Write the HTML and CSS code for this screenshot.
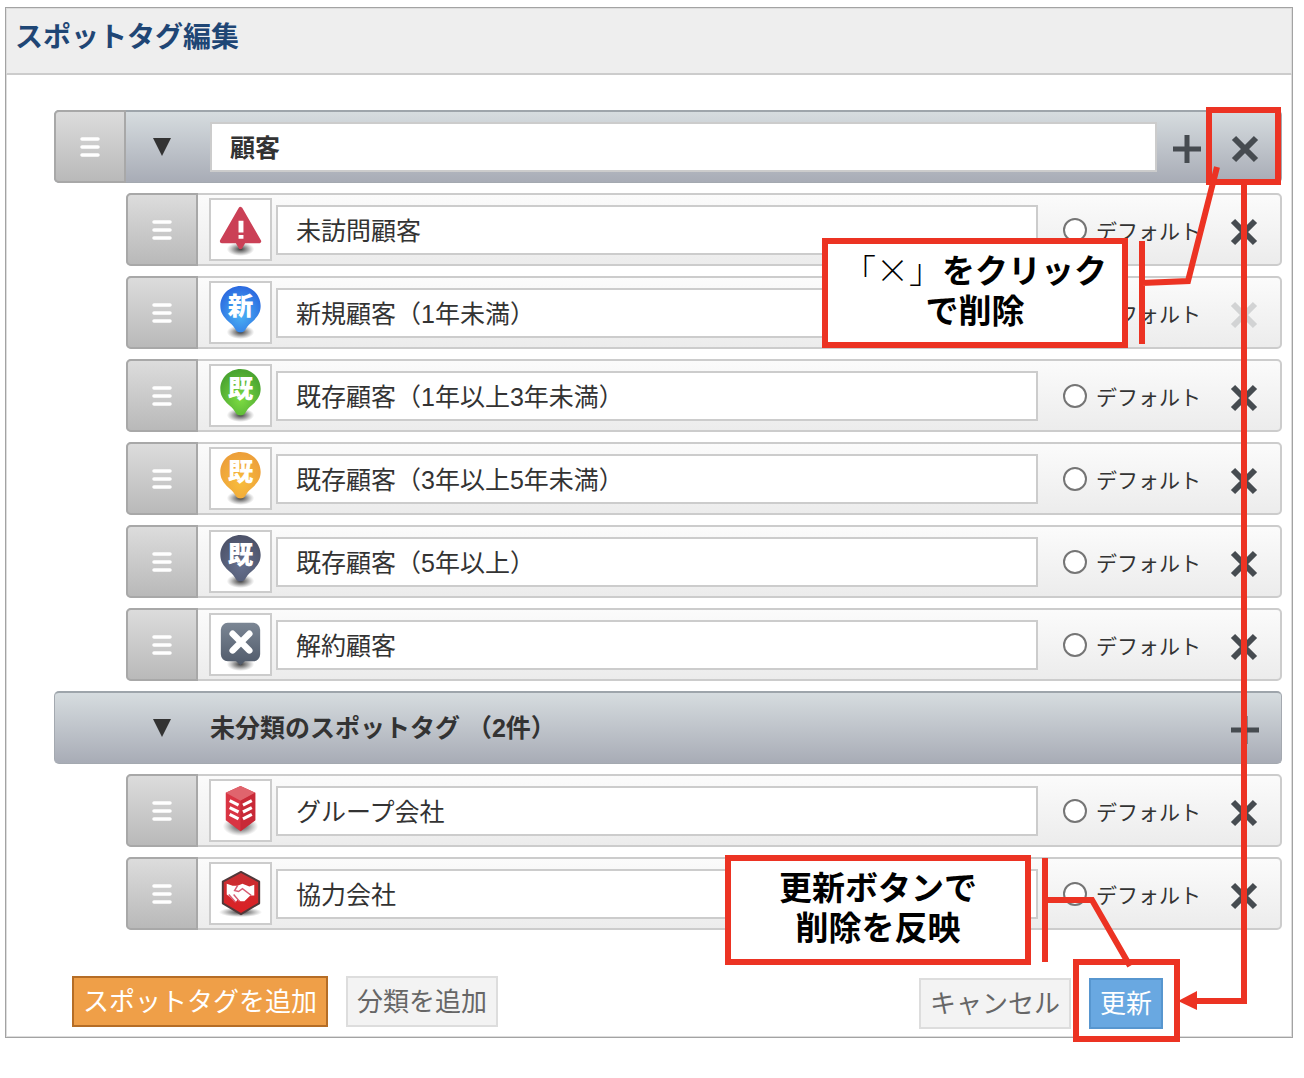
FILE: index.html
```html
<!DOCTYPE html>
<html lang="ja">
<head>
<meta charset="utf-8">
<title>スポットタグ編集</title>
<link rel="stylesheet" href="styles.css">
</head>
<body>
<svg class="defs" width="0" height="0" aria-hidden="true">
  <defs>
    <radialGradient id="shade"><stop offset="0" stop-color="#222" stop-opacity=".9"/><stop offset=".5" stop-color="#444" stop-opacity=".5"/><stop offset="1" stop-color="#666" stop-opacity="0"/></radialGradient>
    <radialGradient id="blue" cx=".5" cy=".62" r=".6"><stop offset="0" stop-color="#4bb4f5"/><stop offset="1" stop-color="#2c6be0"/></radialGradient>
    <radialGradient id="green" cx=".5" cy=".65" r=".6"><stop offset="0" stop-color="#7ddc42"/><stop offset="1" stop-color="#4ba531"/></radialGradient>
    <radialGradient id="orange" cx=".5" cy=".65" r=".6"><stop offset="0" stop-color="#f8bd3c"/><stop offset="1" stop-color="#eda03a"/></radialGradient>
    <radialGradient id="slate" cx=".5" cy=".65" r=".6"><stop offset="0" stop-color="#65708f"/><stop offset="1" stop-color="#4e546b"/></radialGradient>
    <linearGradient id="steel" x2="0" y2="1"><stop offset="0" stop-color="#7b8694"/><stop offset="1" stop-color="#505a6a"/></linearGradient>
    <linearGradient id="ruby" x2="0" y2="1"><stop offset="0" stop-color="#c72f33"/><stop offset="1" stop-color="#dc2024"/></linearGradient>
    <symbol id="pin" viewBox="0 0 60 60"><ellipse cx="30" cy="50" rx="14" ry="7" fill="url(#shade)"/><path d="M30 3C18.500 3 9.500 12 9.500 23.500c0 6 2.500 10 6.500 14 4 3.500 7 6 8.500 9 1.500 5 9.500 5 11 0 1.500-3 4.500-5.500 8.500-9 4-4 6.500-8 6.500-14C50.500 12 41.500 3 30 3z"/></symbol>
    <symbol id="cross" viewBox="0 0 28 28"><path d="M3 3 25 25M25 3 3 25" stroke="currentColor" stroke-width="6"/></symbol>
    <symbol id="plus" viewBox="0 0 28 28"><path d="M14 0V28M0 14H28" stroke="currentColor" stroke-width="5"/></symbol>
    <symbol id="grip" viewBox="0 0 20 20"><path d="M2 2H18M2 10H18M2 18H18" stroke="#fff" stroke-width="3.500" stroke-linecap="round"/></symbol>
  </defs>
</svg>
<div class="stage">
<main class="panel">
  <header class="panel-header"><h1>スポットタグ編集</h1></header>
  <form class="editor">
    <div class="group">
      <button type="button" class="handle" aria-label="並べ替え"><svg><use href="#grip"/></svg></button>
      <button type="button" class="toggle" aria-label="開閉"><span class="caret"></span></button>
      <input class="field group-name" type="text" aria-label="分類名" value="顧客">
      <button type="button" class="add" aria-label="追加"><svg><use href="#plus"/></svg></button>
      <button type="button" class="remove" aria-label="削除"><svg><use href="#cross"/></svg></button>
    </div>

    <div class="tag">
      <button type="button" class="handle" aria-label="並べ替え"><svg><use href="#grip"/></svg></button>
      <button type="button" class="icon" aria-label="アイコン"><svg viewBox="0 0 60 60"><ellipse cx="30" cy="50" rx="14" ry="7" fill="url(#shade)"/><path d="M30 9 49 42H33.500L30 48 26.500 42H11z" fill="#cb4056" stroke="#cb4056" stroke-width="4" stroke-linejoin="round"/><path d="M28 21h5v12h-5zM28 35.500h5v4h-5z" fill="#fff"/></svg></button>
      <input class="field" type="text" aria-label="タグ名" value="未訪問顧客">
      <label class="default"><input type="radio" name="default">デフォルト</label>
      <button type="button" class="remove" aria-label="削除"><svg><use href="#cross"/></svg></button>
    </div>

    <div class="tag">
      <button type="button" class="handle" aria-label="並べ替え"><svg><use href="#grip"/></svg></button>
      <button type="button" class="icon" aria-label="アイコン"><svg viewBox="0 0 60 60"><use href="#pin" fill="url(#blue)"/><text x="30" y="33">新</text></svg></button>
      <input class="field" type="text" aria-label="タグ名" value="新規顧客（1年未満）">
      <label class="default"><input type="radio" name="default">デフォルト</label>
      <button type="button" class="remove" aria-label="削除" disabled><svg><use href="#cross"/></svg></button>
    </div>

    <div class="tag">
      <button type="button" class="handle" aria-label="並べ替え"><svg><use href="#grip"/></svg></button>
      <button type="button" class="icon" aria-label="アイコン"><svg viewBox="0 0 60 60"><use href="#pin" fill="url(#green)"/><text x="30" y="33">既</text></svg></button>
      <input class="field" type="text" aria-label="タグ名" value="既存顧客（1年以上3年未満）">
      <label class="default"><input type="radio" name="default">デフォルト</label>
      <button type="button" class="remove" aria-label="削除"><svg><use href="#cross"/></svg></button>
    </div>

    <div class="tag">
      <button type="button" class="handle" aria-label="並べ替え"><svg><use href="#grip"/></svg></button>
      <button type="button" class="icon" aria-label="アイコン"><svg viewBox="0 0 60 60"><use href="#pin" fill="url(#orange)"/><text x="30" y="33">既</text></svg></button>
      <input class="field" type="text" aria-label="タグ名" value="既存顧客（3年以上5年未満）">
      <label class="default"><input type="radio" name="default">デフォルト</label>
      <button type="button" class="remove" aria-label="削除"><svg><use href="#cross"/></svg></button>
    </div>

    <div class="tag">
      <button type="button" class="handle" aria-label="並べ替え"><svg><use href="#grip"/></svg></button>
      <button type="button" class="icon" aria-label="アイコン"><svg viewBox="0 0 60 60"><use href="#pin" fill="url(#slate)"/><text x="30" y="33">既</text></svg></button>
      <input class="field" type="text" aria-label="タグ名" value="既存顧客（5年以上）">
      <label class="default"><input type="radio" name="default">デフォルト</label>
      <button type="button" class="remove" aria-label="削除"><svg><use href="#cross"/></svg></button>
    </div>

    <div class="tag">
      <button type="button" class="handle" aria-label="並べ替え"><svg><use href="#grip"/></svg></button>
      <button type="button" class="icon" aria-label="アイコン"><svg viewBox="0 0 60 60"><ellipse cx="30" cy="50" rx="14" ry="7" fill="url(#shade)"/><path d="M17 8H43a7 7 0 0 1 7 7V40a7 7 0 0 1-7 7H34.500L30 51 25.500 47H17a7 7 0 0 1-7-7V15a7 7 0 0 1 7-7z" fill="url(#steel)"/><path d="M22 19 39 36M39 19 22 36" stroke="#fff" stroke-width="6.500" stroke-linecap="round"/></svg></button>
      <input class="field" type="text" aria-label="タグ名" value="解約顧客">
      <label class="default"><input type="radio" name="default">デフォルト</label>
      <button type="button" class="remove" aria-label="削除"><svg><use href="#cross"/></svg></button>
    </div>

    <div class="group unsorted">
      <button type="button" class="toggle" aria-label="開閉"><span class="caret"></span></button>
      <h2>未分類のスポットタグ （2件）</h2>
      <button type="button" class="remove" aria-label="追加"><svg><use href="#plus"/></svg></button>
    </div>

    <div class="tag">
      <button type="button" class="handle" aria-label="並べ替え"><svg><use href="#grip"/></svg></button>
      <button type="button" class="icon" aria-label="アイコン"><svg viewBox="0 0 60 60"><ellipse cx="30" cy="46" rx="18" ry="10" fill="url(#shade)"/><path d="M30 5 45 12V40L30 51 15 40V12z" fill="#d93443"/><path d="M30 5 45 12 30 20 15 12z" fill="#e0646d"/><path d="M30 20V51L45 40V12z" fill="#c82937"/><path d="M19 20 28 24.500M19 27 28 31.500M19 34 28 38.500M32.500 24.500 41.500 20M32.500 31.500 41.500 27M32.500 38.500 41.500 34" stroke="#fff" stroke-width="3.200"/></svg></button>
      <input class="field" type="text" aria-label="タグ名" value="グループ会社">
      <label class="default"><input type="radio" name="default">デフォルト</label>
      <button type="button" class="remove" aria-label="削除"><svg><use href="#cross"/></svg></button>
    </div>

    <div class="tag">
      <button type="button" class="handle" aria-label="並べ替え"><svg><use href="#grip"/></svg></button>
      <button type="button" class="icon" aria-label="アイコン"><svg viewBox="0 0 60 60"><ellipse cx="30" cy="49" rx="22" ry="5" fill="url(#shade)"/><path d="M30.500 8 49 18V40L30.500 51 12 40V18z" fill="url(#ruby)" stroke="#50383a" stroke-width="2" stroke-linejoin="round"/><path d="M16 20 22 22 27 22 32 20 39 23 44 21V32L40 32 34 38 30 38 27 36 25 39 20 34 16 31z" fill="#fff"/><path d="M27 22 24 27 28 28 32 25 41 32M18 31 25 39M23 31 29 38" fill="none" stroke="#d75b72" stroke-width="1.500"/></svg></button>
      <input class="field" type="text" aria-label="タグ名" value="協力会社">
      <label class="default"><input type="radio" name="default">デフォルト</label>
      <button type="button" class="remove" aria-label="削除"><svg><use href="#cross"/></svg></button>
    </div>

    <footer class="actions">
      <button type="button" class="btn btn-add">スポットタグを追加</button>
      <button type="button" class="btn">分類を追加</button>
      <div class="actions-end">
        <button type="button" class="btn">キャンセル</button>
        <button type="submit" class="btn btn-update">更新</button>
      </div>
    </footer>
  </form>
</main>

<svg class="guide" viewBox="704 0 600 1078" aria-hidden="true">
  <g fill="none" stroke="#ec3323" stroke-width="6">
    <rect x="1209" y="110" width="69" height="72"/>
    <path d="M1244 183V1001H1194"/>
    <path d="M1142 241V344M1142 283 1188 281 1217 167"/>
    <path d="M1045 858V962M1045 900H1092L1130 966"/>
    <rect x="1076" y="962" width="101" height="77"/>
  </g>
  <path d="M1178 1001 1197 991V1010z" fill="#ec3323"/>
</svg>
<p class="callout callout-delete"><span class="thin">「×」</span>をクリック<br>で削除</p>
<p class="callout callout-update">更新ボタンで<br>削除を反映</p>
</div>
</body>
</html>
```

FILE: styles.css
```css
* { box-sizing: border-box; }

body {
  margin: 0;
  background: #fff;
  color: #333;
  font-family: "Liberation Sans", "Noto Sans CJK JP", sans-serif;
  font-size: 25px;
}

button, input { font: inherit; color: inherit; margin: 0; padding: 0; }
button { background: none; border: 0; display: flex; align-items: center; justify-content: center; }
.defs { position: absolute; }

.stage { position: relative; padding: 7px 11px 40px 5px; }

.panel { border: 1px solid #a3a3a3; box-shadow: inset 0 0 0 1px #ddd; }
.panel-header {
  height: 67px;
  padding: 9px 8px;
  background: #eee;
  border: 1px solid #ddd;
  border-bottom: 2px solid #ccc;
}
h1 { margin: 0; font-size: 28px; line-height: 40px; color: #1f4675; }

.editor {
  display: flex;
  flex-direction: column;
  gap: 10px;
  padding: 35px 10px 8px 48px;
}

/* rows */
.group, .tag { display: flex; align-items: center; height: 73px; border-radius: 5px; }
.group {
  background: linear-gradient(#d6dcdf, #a8acb6);
  border: 1px solid #a4a9b0;
  border-top: 2px solid #9ea5ab;
}
.tag {
  margin-left: 72px;
  background: linear-gradient(#fbfbfb, #ececec);
  border: 2px solid #ccc;
}

.handle {
  flex: none;
  align-self: stretch;
  width: 72px;
  margin: -2px 0 -1px -1px;
  background: linear-gradient(#dcdcdc, #b9b9b9);
  border: 2px solid #a8a8a8;
  border-radius: 5px 0 0 5px;
}
.tag .handle { margin: -2px 0 -2px -2px; }
.handle svg { width: 20px; height: 20px; }

.toggle { flex: none; width: 72px; height: 60px; margin-right: 12px; }
.caret { border: 9px solid transparent; border-top: 18px solid #333; border-bottom: 0; }

.icon {
  flex: none;
  width: 63px;
  height: 63px;
  margin: 0 4px 0 11px;
  background: #fff;
  border: 2px solid #ccc;
}
.icon svg { width: 59px; height: 59px; }
.icon text {
  font: 900 26px "Noto Sans CJK JP", sans-serif;
  fill: #fff;
  text-anchor: middle;
}

.field {
  flex: 1;
  min-width: 0;
  height: 50px;
  padding: 0 18px 2px;
  background: #fff;
  border: 2px solid #ccc;
  border-radius: 0;
}
.group-name { font-weight: bold; }

.default {
  flex: none;
  display: flex;
  align-items: center;
  gap: 9px;
  width: 170px;
  padding-left: 25px;
  font-size: 21px;
  white-space: nowrap;
}
.default input {
  appearance: none;
  width: 24px;
  height: 24px;
  background: #fff;
  border: 2px solid #757575;
  border-radius: 50%;
}

.add { flex: none; width: 44px; height: 60px; margin-left: 8px; padding-top: 4px; color: #464b50; }
.remove { flex: none; width: 72px; height: 60px; padding-top: 4px; color: #464b50; }
.remove:disabled { color: #d2d3d4; }
.add svg, .remove svg { width: 28px; height: 28px; }

.unsorted { padding-left: 71px; }
h2 { flex: 1; margin: 0; padding-bottom: 4px; font-size: 25px; }

/* buttons under the list */
.actions { display: flex; gap: 18px; margin-top: 36px; padding-left: 18px; }
.actions-end { display: flex; gap: 18px; margin: 2px 119px 0 auto; }
.btn {
  height: 51px;
  padding: 0 9px 4px;
  background: #f3f3f3;
  border: 2px solid #ddd;
  color: #666;
  font-size: 26px;
  white-space: nowrap;
}
.btn-add { background: #ef9f48; border-color: #b56d26; color: #fff; }
.btn-update { background: #69a8e1; border-color: #5796cf; color: #fff; }

/* guide drawn over the form */
.guide { position: absolute; top: 0; right: 0; width: 600px; height: 1078px; pointer-events: none; }
.callout {
  position: absolute;
  width: 306px;
  height: 110px;
  margin: 0;
  padding: 5px 0;
  background: #fff;
  border: 6px solid #ec3323;
  color: #000;
  font: bold 33px/40px "Noto Sans CJK JP", sans-serif;
  text-align: center;
  white-space: nowrap;
}
.callout-delete { top: 238px; right: 176px; }
.callout-update { top: 855px; right: 273px; }
.thin { font-weight: 300; }
```
